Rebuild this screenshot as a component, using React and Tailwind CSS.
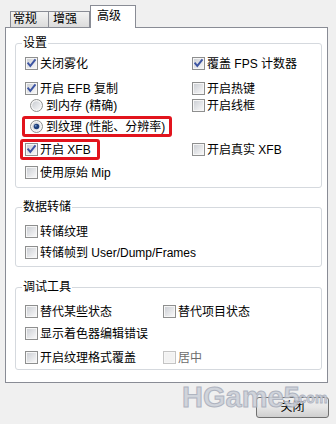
import React from "react";

const Check = ({ checked, disabled }) => (
  <svg width="13" height="13" viewBox="0 0 13 13" className="shrink-0">
    <defs>
      <linearGradient id="cbg" x1="0" y1="0" x2="1" y2="1">
        <stop offset="0" stopColor="#cdd0d5" />
        <stop offset="1" stopColor="#f7f7f8" />
      </linearGradient>
    </defs>
    <rect x="0.5" y="0.5" width="12" height="12" fill="#f6f6f6" stroke={disabled ? "#c4c4c4" : "#8e8f8f"} />
    <rect x="2" y="2" width="9" height="9" fill={disabled ? "#f2f2f2" : "url(#cbg)"} />
    {checked && (
      <path d="M3.2 6.4 L5.3 8.9 L9.9 3.1" fill="none" stroke="#3d55a3" strokeWidth="1.9" strokeLinecap="square" />
    )}
  </svg>
);

const Radio = ({ checked }) => (
  <svg width="13" height="13" viewBox="0 0 13 13" className="shrink-0">
    <defs>
      <linearGradient id="rbg" x1="0" y1="0" x2="1" y2="1">
        <stop offset="0" stopColor="#c9ccd2" />
        <stop offset="1" stopColor="#f7f7f8" />
      </linearGradient>
    </defs>
    <circle cx="6.5" cy="6.5" r="6" fill="#f6f6f6" stroke="#8e8f8f" />
    <circle cx="6.5" cy="6.5" r="4.3" fill="url(#rbg)" />
    {checked && (
      <>
        <circle cx="6.5" cy="6.5" r="2.8" fill="#1d3f7c" />
        <circle cx="5.7" cy="5.7" r="1" fill="#6f93c9" />
      </>
    )}
  </svg>
);

const Item = ({ label, checked, radio, disabled, className = "" }) => (
  <div className={`flex items-center h-[17px] ${className}`}>
    {radio ? <Radio checked={checked} /> : <Check checked={checked} disabled={disabled} />}
    <span className={`${radio ? "ml-[3px]" : "ml-[2px]"} whitespace-nowrap ${disabled ? "text-[#6d6d6d]" : "text-black"}`}>
      {label}
    </span>
  </div>
);

const Group = ({ title, className = "", children }) => (
  <fieldset className={`border border-[#d5d9de] rounded-[3px] pl-[6px] ${className}`}>
    <legend className="px-[1px] leading-[16px] text-black">{title}</legend>
    <div className="pl-[3px]">{children}</div>
  </fieldset>
);

export default function App() {
  return (
    <div
      className="relative w-[336px] h-[424px] overflow-hidden bg-[#f0f0f0] text-[12px] leading-[16px]"
      style={{ fontFamily: '"Liberation Sans", "Noto Sans CJK SC", sans-serif' }}
    >
      {/* tabs */}
      <div className="flex items-end h-[27px] pl-[10px]">
        <div className="w-[39px] h-[16px] border border-b-0 border-[#898c95] bg-gradient-to-b from-[#f3f3f3] to-[#dcdcdc] pl-[2px] leading-[15px]">
          常规
        </div>
        <div className="w-[41px] h-[16px] border border-l-0 border-b-0 border-[#898c95] bg-gradient-to-b from-[#f3f3f3] to-[#dcdcdc] pl-[4px] leading-[15px]">
          增强
        </div>
        <div className="relative z-10 -mb-px w-[46px] h-[23px] border border-b-0 border-[#898c95] bg-white pl-[6px] pt-[2px]">
          高级
        </div>
      </div>

      {/* panel */}
      <div className="ml-[5px] w-[323px] h-[356px] border border-[#898c95] bg-white pl-[9px] pr-[5px] pt-[7px]">
        <Group title="设置" className="pb-[6px]">
          <div className="flex mt-[4px]">
            <div className="w-[167px]"><Item label="关闭雾化" checked /></div>
            <Item label="覆盖 FPS 计数器" checked />
          </div>
          <div className="flex mt-[8px]">
            <div className="w-[167px]"><Item label="开启 EFB 复制" checked /></div>
            <Item label="开启热键" />
          </div>
          <div className="flex">
            <div className="w-[167px] pl-[5px]"><Item label="到内存 (精确)" radio /></div>
            <Item label="开启线框" />
          </div>
          <div className="flex mt-[2px]">
            <div className="-ml-[3px] w-[150px] h-[21px] border-[3px] border-[#e2141d] rounded-[3px] pl-[5px] flex items-center">
              <Item label="到纹理 (性能、分辨率)" radio checked />
            </div>
          </div>
          <div className="flex mt-[2px] items-center">
            <div className="w-[167px]">
              <div className="-ml-[5px] w-[80px] h-[21px] border-[3px] border-[#e2141d] rounded-[3px] pl-[2px] flex items-center">
                <Item label="开启 XFB" checked />
              </div>
            </div>
            <Item label="开启真实 XFB" />
          </div>
          <Item label="使用原始 Mip" className="mt-[4px]" />
        </Group>

        <Group title="数据转储" className="mt-[11px] pb-[5px]">
          <Item label="转储纹理" className="mt-[8px]" />
          <Item label="转储帧到 User/Dump/Frames" className="mt-[4px]" />
        </Group>

        <Group title="调试工具" className="mt-[12px] pb-[3px]">
          <div className="flex mt-[8px]">
            <div className="w-[138px]"><Item label="替代某些状态" /></div>
            <Item label="替代项目状态" />
          </div>
          <Item label="显示着色器编辑错误" className="mt-[5px]" />
          <div className="flex mt-[7px]">
            <div className="w-[138px]"><Item label="开启纹理格式覆盖" /></div>
            <Item label="居中" disabled />
          </div>
        </Group>
      </div>

      {/* footer */}
      <div className="flex justify-end pr-[7px] mt-[14px]">
        <button className="w-[73px] h-[21px] border border-[#707070] rounded-[3px] bg-gradient-to-b from-[#f2f2f2] via-[#e6e6e6] to-[#cfcfcf] text-[12px] leading-[19px] text-black">
          关闭
        </button>
      </div>

      {/* watermark */}
      <div className="absolute left-[182px] top-[382px] flex items-end pointer-events-none opacity-90">
        <span
          className="text-[29px] leading-[30px] font-bold text-[#cdd1d9]"
          style={{ WebkitTextStroke: "1px #a9aebb" }}
        >
          HGame5
        </span>
        <span
          className="text-[14px] leading-[18px] font-bold text-[#cdd1d9] -ml-[5px] mb-[5px]"
          style={{ WebkitTextStroke: "0.8px #a9aebb" }}
        >
          .com
        </span>
      </div>
    </div>
  );
}
